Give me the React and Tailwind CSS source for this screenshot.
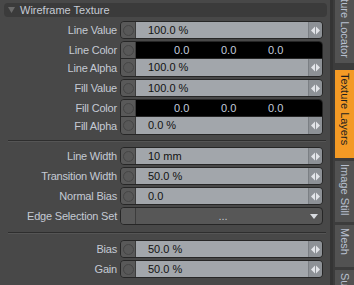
import React from 'react';

const font = { fontFamily: '"Liberation Sans", Arial, sans-serif' };

const Arrows = () => (
  <svg width="9" height="9" viewBox="0 0 9 9">
    <polygon points="4,0.5 4,8.5 0,4.5" fill="#e2e4e8" />
    <polygon points="5,0.5 5,8.5 9,4.5" fill="#e2e4e8" />
  </svg>
);

const Knob = ({ circle = true }) => (
  <div className="w-[15px] shrink-0 bg-[#595959] border-r border-[#3c3c3c] flex items-center justify-center">
    {circle && <span className="w-[11px] h-[11px] rounded-full border border-[#464646] bg-[#585858]" />}
  </div>
);

const Label = ({ children }) => (
  <div className="w-[120px] shrink-0 pr-[3px] text-right text-[11px] leading-none text-[#c5cad4] self-center tracking-[-0.2px]">
    {children}
  </div>
);

const ValueCell = ({ value }) => (
  <div className="flex flex-1 h-full">
    <Knob />
    <div className="flex-1 bg-[#a2a6ab] flex items-center pl-[12px] text-[11px] text-[#121212]">{value}</div>
    <div className="w-[14px] bg-[#8d9196] border-l border-[#7b7f84] flex items-center justify-center">
      <Arrows />
    </div>
  </div>
);

const ColorCell = () => (
  <div className="flex flex-1 h-full">
    <Knob />
    <div className="flex-1 bg-black flex items-center pl-[38px] text-[11px] text-[#c3cbdc]">
      <span className="w-[47px]">0.0</span>
      <span className="w-[47px]">0.0</span>
      <span>0.0</span>
    </div>
  </div>
);

const Row = ({ label, value }) => (
  <div className="flex h-[18px]">
    <Label>{label}</Label>
    <div className="w-[203px] h-[18px] flex rounded-[4px] border border-[#262626] overflow-hidden">
      <ValueCell value={value} />
    </div>
  </div>
);

const ColorGroup = ({ color, alpha, alphaValue }) => (
  <div className="flex">
    <div className="flex flex-col">
      <div className="h-[18px] flex"><Label>{color}</Label></div>
      <div className="h-[18px] flex"><Label>{alpha}</Label></div>
    </div>
    <div className="w-[203px] flex flex-col rounded-[4px] border border-[#262626] overflow-hidden">
      <div className="h-[17px] flex border-b border-[#262626]"><ColorCell /></div>
      <div className="h-[17px] flex"><ValueCell value={alphaValue} /></div>
    </div>
  </div>
);

const Divider = ({ className }) => (
  <div className={`mx-[8px] h-[2px] border-t border-[#2e2e2e] bg-[#555555] w-[318px] ${className}`} />
);

const Tab = ({ children, active, className }) => (
  <div
    className={`w-[19px] shrink-0 overflow-hidden flex flex-col ${active ? 'bg-[#f39a25] text-[#1e1e1e]' : 'bg-[#525252] text-[#b9c0cf]'} ${className}`}
  >
    <span className="text-[11px] leading-[19px] whitespace-nowrap" style={{ writingMode: 'vertical-rl' }}>
      {children}
    </span>
  </div>
);

export default function App() {
  return (
    <div className="w-[354px] h-[285px] overflow-hidden flex bg-[#484848]" style={font}>
      <div className="w-[330px] shrink-0 flex flex-col pt-[3px]">
        <div className="ml-[4px] w-[323px] h-[14px] rounded-[4px] bg-[#3b3b3b] flex items-center">
          <svg width="7" height="6" viewBox="0 0 7 6" className="ml-[4px]">
            <polygon points="0,0 7,0 3.5,6" fill="#6a6a6a" />
          </svg>
          <span className="ml-[5px] text-[11px] text-[#c5cad4]">Wireframe Texture</span>
        </div>
        <div className="flex flex-col gap-[2px] mt-[4px]">
          <Row label="Line Value" value="100.0 %" />
          <ColorGroup color="Line Color" alpha="Line Alpha" alphaValue="100.0 %" />
          <Row label="Fill Value" value="100.0 %" />
          <ColorGroup color="Fill Color" alpha="Fill Alpha" alphaValue="0.0 %" />
        </div>
        <Divider className="mt-[5px] mb-[5px]" />
        <div className="flex flex-col gap-[2px]">
          <Row label="Line Width" value="10 mm" />
          <Row label="Transition Width" value="50.0 %" />
          <Row label="Normal Bias" value="0.0" />
          <div className="flex h-[18px]">
            <Label>Edge Selection Set</Label>
            <div className="w-[203px] h-[18px] flex rounded-[4px] border border-[#262626] overflow-hidden bg-[#575757]">
              <Knob circle={false} />
              <div className="flex-1 flex items-center justify-center text-[11px] text-[#c5cad4] pl-[4px]">...</div>
              <div className="w-[16px] flex items-center justify-center">
                <svg width="8" height="5" viewBox="0 0 8 5">
                  <polygon points="0,0 8,0 4,5" fill="#d8dbe0" />
                </svg>
              </div>
            </div>
          </div>
        </div>
        <Divider className="mt-[7px] mb-[6px]" />
        <div className="flex flex-col gap-[2px]">
          <Row label="Bias" value="50.0 %" />
          <Row label="Gain" value="50.0 %" />
        </div>
      </div>
      <div className="w-[3px] bg-[#343434]" />
      <div className="flex-1 flex flex-col gap-[3px] bg-[#3c3c3c] pl-[2px]">
        <Tab className="h-[63px] justify-end pb-[5px]">Texture Locator</Tab>
        <Tab active className="h-[88px] mt-[4px] pt-[3px]">Texture Layers</Tab>
        <Tab className="h-[61px] pt-[3px]">Image Still</Tab>
        <Tab className="h-[42px] pt-[3px]">Mesh</Tab>
        <Tab className="h-[30px] pt-[3px]">Surface</Tab>
      </div>
    </div>
  );
}
